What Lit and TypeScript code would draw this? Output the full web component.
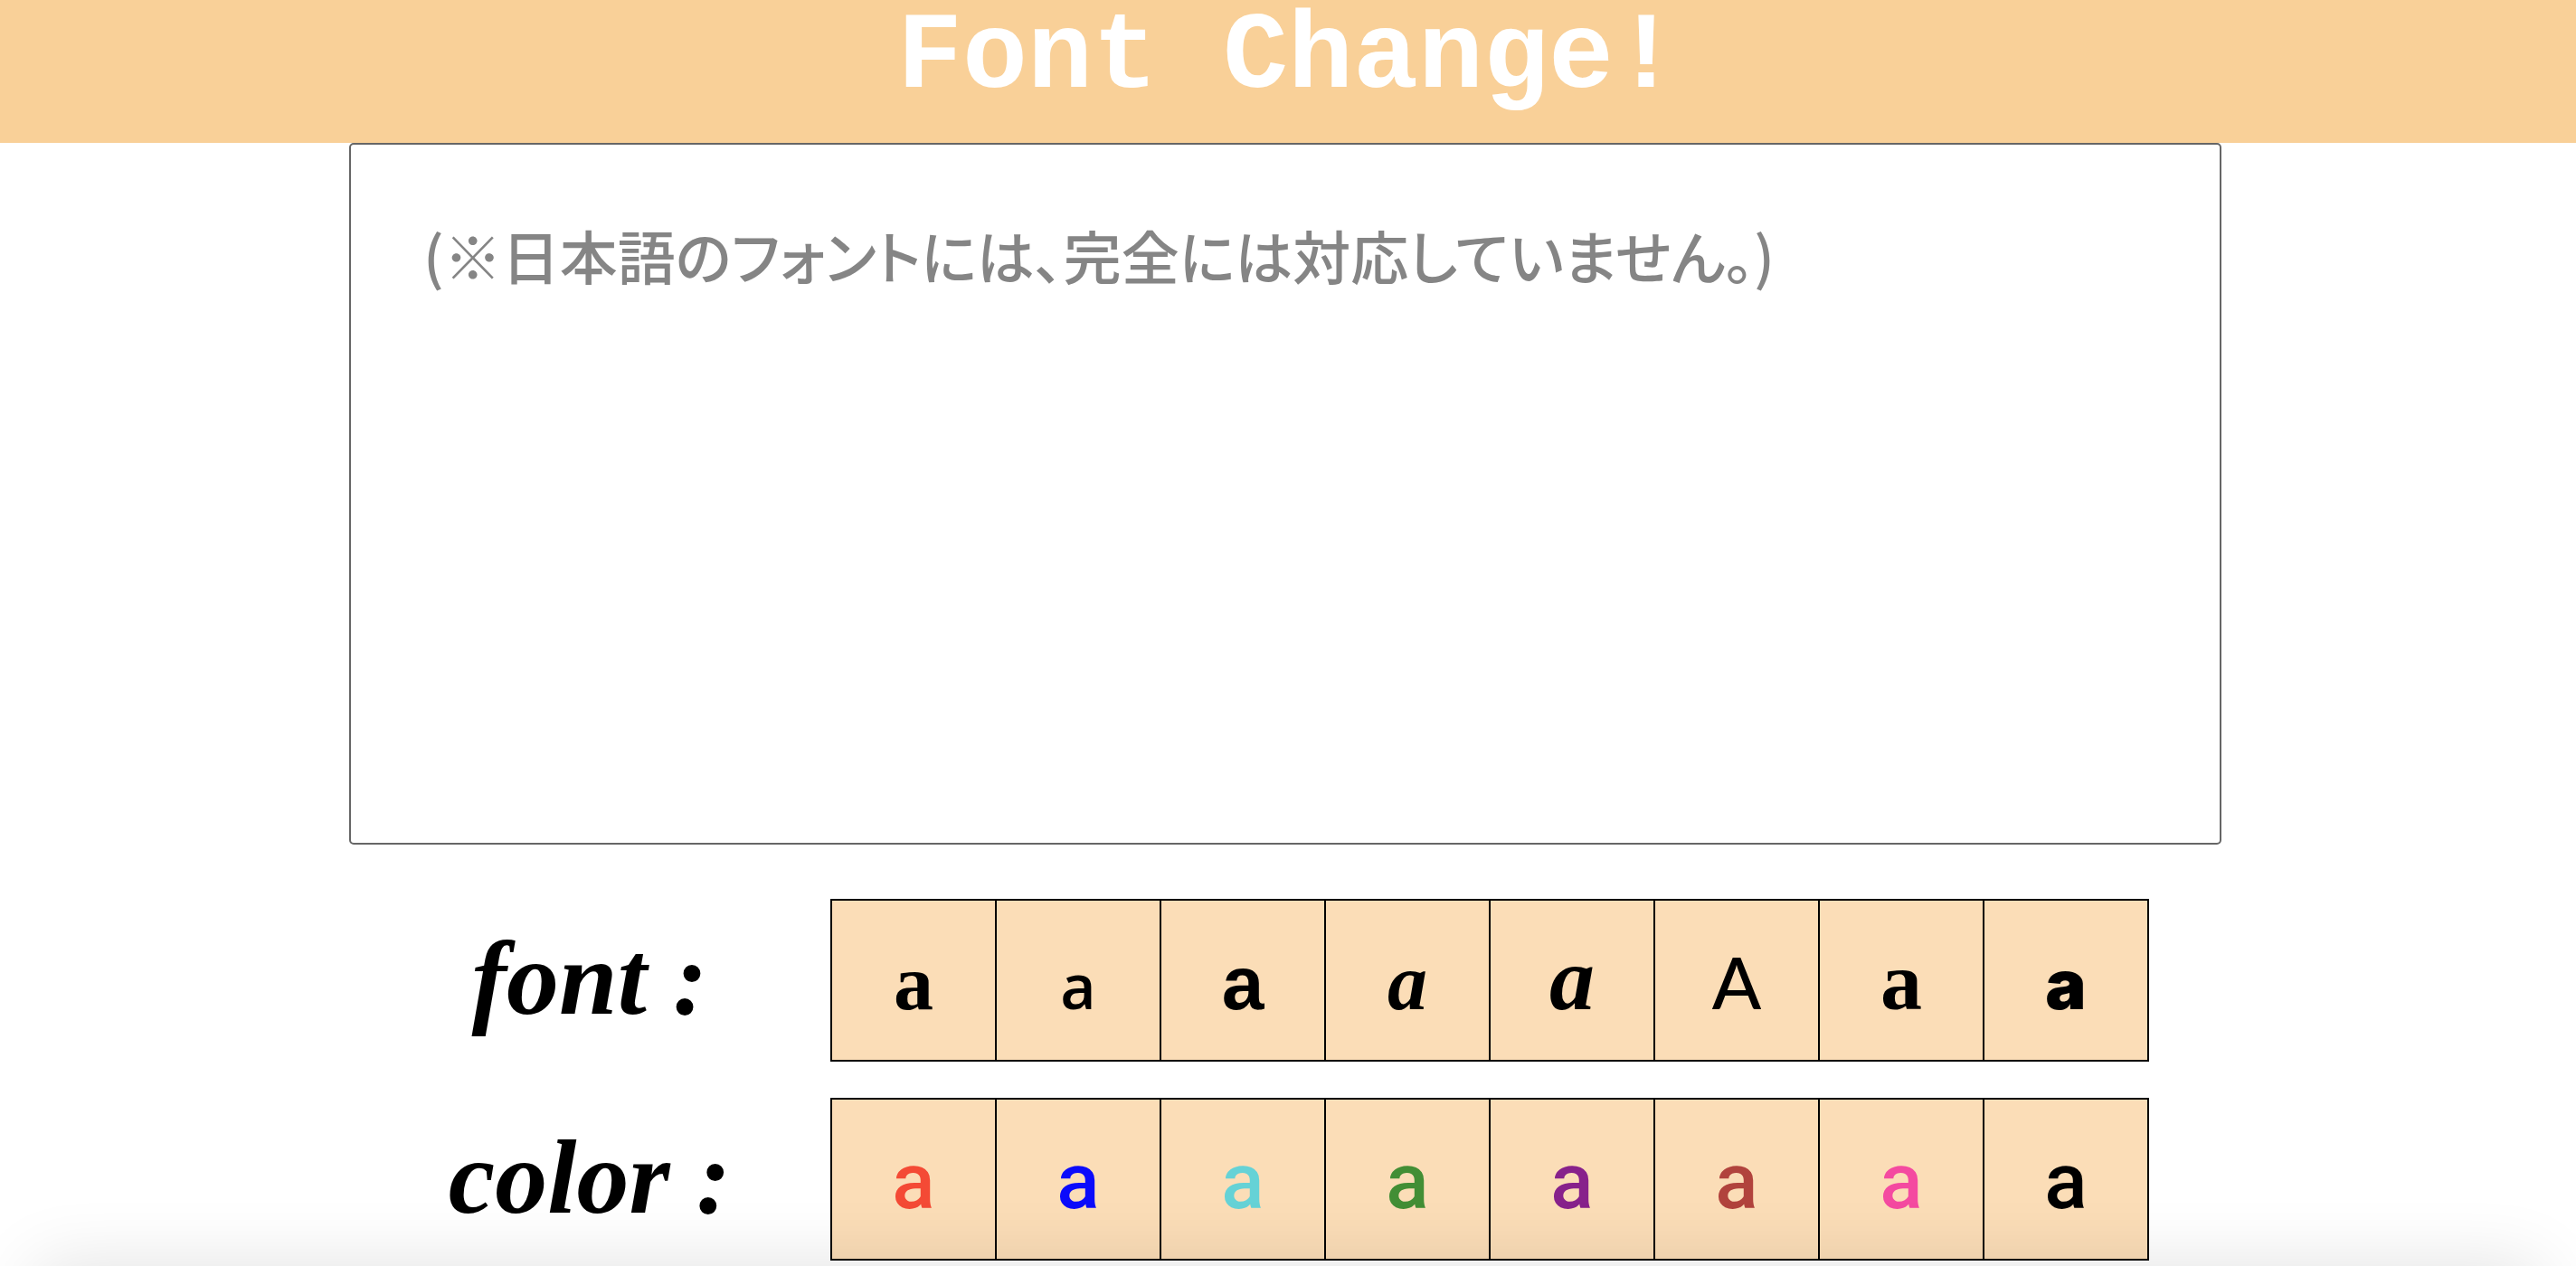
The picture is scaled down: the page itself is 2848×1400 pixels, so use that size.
import { LitElement, css, html } from "lit";
import { customElement, state } from "lit/decorators.js";
import { classMap } from "lit/directives/class-map.js";

const FONTS = ["bodoni", "rounded", "gothic", "cursive", "brush", "roman", "script", "heavy"];
const COLORS = ["red", "blue", "aqua", "green", "purple", "brown", "pink", "black"];

@customElement("app-root")
export class AppRoot extends LitElement {
  static styles = css`
    :host {
      display: block;
      min-height: 100vh;
      background: #fff;
      color: #000;
      font-family: "Liberation Sans", sans-serif;
    }
    .header {
      padding-bottom: 30px;
      background: #f9d098;
    }
    .title {
      margin: 0;
      color: #fff;
      font: bold 120px/128px "Liberation Mono", monospace;
      text-align: center;
    }
    .main {
      padding: 0 392px 0 386px;
    }
    .text {
      display: block;
      box-sizing: border-box;
      width: 100%;
      height: 776px;
      margin: 0 0 60px;
      padding: 76px 80px;
      border: 2px solid #666;
      border-radius: 5px;
      outline: none;
      resize: none;
      overflow: hidden;
      background: #fff;
      color: #000;
      font-family: "Noto Sans CJK JP", sans-serif;
      font-size: 64px;
      font-weight: 500;
      line-height: 90px;
      font-feature-settings: "palt";
    }
    .text::placeholder {
      color: #858585;
      opacity: 1;
    }
    .row {
      display: grid;
      grid-template-columns: 532px 1fr;
      margin-bottom: 40px;
      padding-right: 80px;
    }
    .label {
      margin: 0;
      font: italic bold 116px/176px "Liberation Serif", serif;
      text-align: center;
    }
    .cells {
      display: flex;
      border: 2px solid #000;
      border-right: 0;
    }
    .cell {
      flex: 1;
      height: 176px;
      margin: 0;
      padding: 4px 0 0;
      border: 0;
      border-right: 2px solid #000;
      border-radius: 0;
      background: #fbddb7;
      color: #000;
      font: 500 88px/172px "Roboto", sans-serif;
      text-align: center;
      cursor: pointer;
    }
    .glyph {
      line-height: 1;
    }
    .bodoni { font: bold 88px/1 "Liberation Serif", serif; }
    .rounded { font: 600 68px/1 "Open Sans", sans-serif; }
    .gothic { font: bold 84px/1 "Liberation Sans", sans-serif; }
    .cursive { font: italic bold 88px/1 "Liberation Serif", serif; }
    .brush { font: italic bold 100px/1 "Liberation Serif", serif; }
    .roman { font: 500 80px/1 "Lato", sans-serif; text-transform: uppercase; }
    .script { font: bold 92px/1 "Liberation Serif", serif; }
    .heavy { font: 900 76px/1 "Inter", sans-serif; }
    .red { color: #f44a35; }
    .blue { color: #0b0bfb; }
    .aqua { color: #65d2d6; }
    .green { color: #428e35; }
    .purple { color: #87218b; }
    .brown { color: #b1433d; }
    .pink { color: #f44aa0; }
    .black { color: #000; }
    .shade {
      position: fixed;
      left: 40px;
      right: 40px;
      bottom: -120px;
      height: 120px;
      box-shadow: 0 0 80px rgba(0, 0, 0, 0.12);
      pointer-events: none;
    }
  `;

  @state() private font = "";
  @state() private color = "";

  private row(name: string, options: string[], pick: (value: string) => void) {
    return html`
      <section class="row">
        <h2 class="label" id=${name}>${name} :</h2>
        <div class="cells" role="group" aria-labelledby=${name}>
          ${options.map(
            (option) => html`<button class="cell" type="button" aria-label=${option} @click=${() => pick(option)}><span class=${classMap({ glyph: true, [option]: true })}>a</span></button>`
          )}
        </div>
      </section>
    `;
  }

  render() {
    const chosen: Record<string, boolean> = { text: true };
    if (this.font) chosen[this.font] = true;
    if (this.color) chosen[this.color] = true;
    return html`
      <header class="header"><h1 class="title">Font Change!</h1></header>
      <main class="main">
        <textarea
          class=${classMap(chosen)}
          aria-label="Text"
          spellcheck="false"
          placeholder="(※日本語のフォントには、完全には対応していません。)"
        ></textarea>
        ${this.row("font", FONTS, (value) => (this.font = value))}
        ${this.row("color", COLORS, (value) => (this.color = value))}
      </main>
      <div class="shade"></div>
    `;
  }
}
